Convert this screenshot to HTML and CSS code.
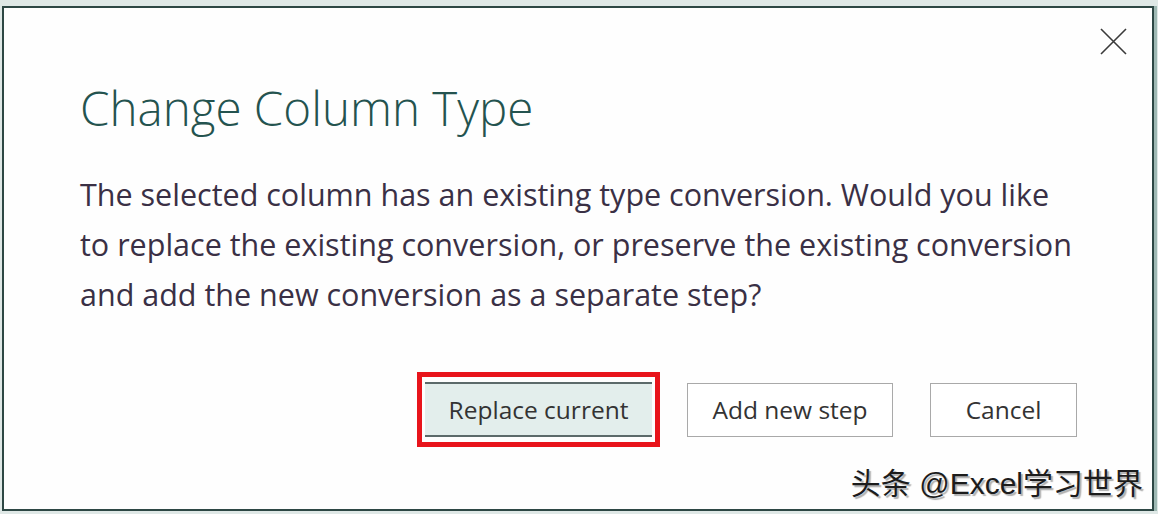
FILE: index.html
```html
<!DOCTYPE html>
<html lang="en">
<head>
    <meta charset="UTF-8">
    <title>Change Column Type</title>
    <link rel="stylesheet" href="styles.css">
</head>
<body>
    <div class="dialog">
        <button class="close-btn" aria-label="Close">
            <svg width="27" height="27" viewBox="0 0 27 27">
                <path d="M1 1 L26 26 M26 1 L1 26" stroke="#3a3a3a" stroke-width="1.6" fill="none"/>
            </svg>
        </button>

        <h1 class="dialog-title">Change Column Type</h1>

        <p class="dialog-text">The selected column has an existing type conversion. Would you like to replace the existing conversion, or preserve the existing conversion and add the new conversion as a separate step?</p>

        <div class="dialog-actions">
            <div class="highlight">
                <button class="btn btn-primary">Replace current</button>
            </div>
            <button class="btn btn-add">Add new step</button>
            <button class="btn btn-cancel">Cancel</button>
        </div>

        <div class="watermark">头条 @Excel学习世界</div>
    </div>
</body>
</html>
```

FILE: styles.css
```css
html, body {
    margin: 0;
    height: 100%;
}
body {
    background: #dfe8e6;
    padding: 6px 4px 3px 2px;
    box-sizing: border-box;
    font-family: "Open Sans", "Noto Sans", sans-serif;
}
.dialog {
    position: relative;
    height: 100%;
    box-sizing: border-box;
    background: #fefefe;
    border: 2px solid #2d4744;
    box-shadow: 3px 0 0 #9fb9b4;
    padding: 0 70px 0 76px;
}
.close-btn {
    position: absolute;
    top: 20px;
    right: 25px;
    background: none;
    border: none;
    padding: 0;
    cursor: pointer;
}
.dialog-title {
    margin: 0;
    padding-top: 68px;
    font-size: 47.5px;
    font-weight: 300;
    color: #24534f;
    line-height: 64px;
    letter-spacing: 0;
}
.dialog-text {
    margin: 29px 0 0 0;
    max-width: 998px;
    font-size: 30.5px;
    line-height: 50px;
    color: #3a3045;
}
.dialog-actions {
    display: flex;
    justify-content: flex-end;
    align-items: center;
    margin-top: 53px;
    margin-right: 5px;
}
.highlight {
    border: 5px solid #e8141b;
    padding: 5px 3px;
    margin-right: 27px;
}
.btn {
    font-family: "Open Sans", "Noto Sans", sans-serif;
    font-size: 24.5px;
    color: #333;
    background: #fff;
    border: 1px solid #a9a9a9;
    height: 54px;
    padding: 0;
    cursor: pointer;
}
.btn-add {
    width: 206px;
    margin-right: 37px;
}
.btn-cancel {
    width: 147px;
}
.btn-primary {
    display: block;
    background: #e3eeec;
    border: none;
    border-top: 2px solid #5c6a6a;
    border-bottom: 2px solid #5c6a6a;
    height: 55px;
    width: 227px;
}
.watermark {
    position: absolute;
    right: 9px;
    bottom: 6px;
    font-family: "Liberation Sans", "Noto Sans CJK SC", sans-serif;
    font-size: 30px;
    color: #1c1c1c;
    text-shadow: 2px 2px 1px #b0b0b0;
}
```
